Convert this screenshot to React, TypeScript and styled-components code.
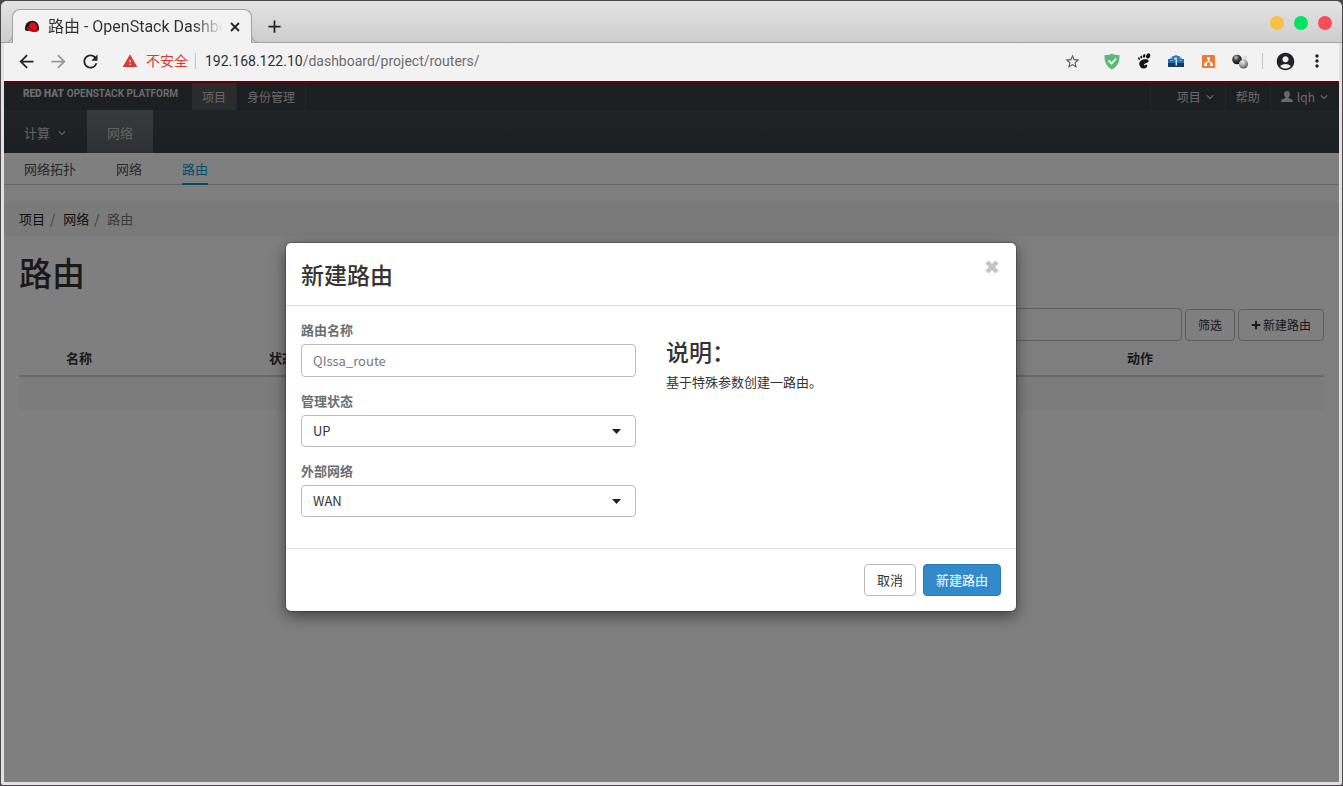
import React from "react";
import styled, { createGlobalStyle, css } from "styled-components";
import {
  MdAccountCircle,
  MdAdd,
  MdArrowBack,
  MdArrowForward,
  MdMoreVert,
  MdRefresh,
  MdStarBorder,
  MdWarning,
} from "react-icons/md";
import { FaPlus } from "react-icons/fa";

const appFont = `"Noto Sans CJK SC", "Noto Sans", sans-serif`;
const chromeFont = `Roboto, "Noto Sans CJK SC", sans-serif`;

const GlobalStyle = createGlobalStyle`
  *, *::before, *::after { box-sizing: border-box; }
  body { margin: 0; background: #161416; }
  button, input, select { font: inherit; color: inherit; margin: 0; }
  a { color: inherit; text-decoration: none; }
  svg { display: block; flex: none; }
`;

/* ---------- browser window ---------- */

const Desktop = styled.div`
  min-height: 100vh;
  display: flex;
  padding: 1px;
  background: #4b474b;
`;

const BrowserWindow = styled.div`
  flex: 1;
  min-width: 0;
  display: flex;
  flex-direction: column;
  border-radius: 6px 6px 2px 2px;
  background: #e2e0e1;
  overflow: hidden;
  font-family: ${chromeFont};
`;

const TitleBar = styled.header`
  height: 42px;
  display: flex;
  align-items: flex-end;
  padding: 0 10px 0 11px;
  background: linear-gradient(#e3e3e3, #cdcdcd);
  border-bottom: 1px solid #a3a3a3;
`;

const foot = css`
  content: "";
  position: absolute;
  bottom: 0;
  width: 8px;
  height: 8px;
  border-bottom: 1px solid #a3a3a3;
`;

const Tab = styled.div`
  position: relative;
  width: 240px;
  height: 34px;
  margin-bottom: -1px;
  padding: 0 9px 0 11px;
  display: flex;
  align-items: center;
  background: #f2f2f2;
  border: 1px solid #a3a3a3;
  border-bottom: 0;
  border-radius: 8px 8px 0 0;
  color: #333;
  &::before {
    ${foot}
    left: -8px;
    border-right: 1px solid #a3a3a3;
    border-bottom-right-radius: 8px;
  }
  &::after {
    ${foot}
    right: -8px;
    border-left: 1px solid #a3a3a3;
    border-bottom-left-radius: 8px;
  }
`;

const TabTitle = styled.span`
  flex: 1;
  min-width: 0;
  margin: 0 6px 0 8px;
  overflow: hidden;
  white-space: nowrap;
  font-size: 16px;
  line-height: 24px;
  mask-image: linear-gradient(90deg, #000 145px, transparent 175px);
`;

const IconButton = styled.button<{ $size?: number; $tone?: string }>`
  width: ${(p) => p.$size ?? 32}px;
  height: ${(p) => p.$size ?? 32}px;
  padding: 0;
  display: flex;
  align-items: center;
  justify-content: center;
  border: 0;
  background: none;
  color: ${(p) => p.$tone ?? "#222326"};
`;

const NewTab = styled(IconButton)`
  margin: 0 auto 0 6px;
`;

const WindowButtons = styled.div`
  display: flex;
  gap: 10px;
  margin-bottom: 12px;
`;

const WindowButton = styled.button<{ $color: string }>`
  width: 14px;
  height: 14px;
  padding: 0;
  border: 0;
  border-radius: 50%;
  background: ${(p) => p.$color};
`;

const Toolbar = styled.div`
  height: 38px;
  margin: 0 3px;
  padding: 0 6px 2px;
  display: flex;
  align-items: center;
  background: #f2f2f2;
`;

const AddressBar = styled.div`
  flex: 1;
  min-width: 0;
  display: flex;
  align-items: center;
  padding-left: 16px;
  font-size: 14px;
  line-height: 20px;
  white-space: nowrap;
`;

const Insecure = styled.span`
  display: flex;
  align-items: center;
  gap: 8px;
  padding-right: 7px;
  color: #d93a33;
`;

const Divider = styled.span`
  width: 1px;
  height: 16px;
  background: #c4c4c4;
`;

const Url = styled.span`
  padding-left: 9px;
  color: #6d6d6f;
  b {
    font-weight: 400;
    color: #2f3033;
  }
`;

const Extensions = styled.div`
  display: flex;
  align-items: center;
  margin: 0 6px 0 8px;
`;

const AccountArea = styled.div`
  display: flex;
  align-items: center;
  padding-left: 6px;
`;

/* ---------- dashboard ---------- */

const Viewport = styled.div`
  position: relative;
  flex: 1;
  margin: 0 3px 3px;
  background: #fff;
  font-family: ${appFont};
  font-size: 13px;
  line-height: 20px;
  color: #333;
`;

const TopNav = styled.nav`
  height: 29px;
  display: flex;
  background: #393f44;
  border-top: 2px solid #cc0010;
  font-size: 12px;
  color: #d1d1d1;
`;

const Brand = styled.a`
  width: 188px;
  padding-left: 19px;
  display: flex;
  align-items: center;
  gap: 3px;
  height: 22px;
  font-family: Roboto, sans-serif;
  font-size: 10px;
  font-weight: 600;
  white-space: nowrap;
  color: #d8dade;
  b {
    font-weight: 900;
  }
`;

const TopLink = styled.a<{ $active?: boolean; $side?: "left" | "right" }>`
  display: flex;
  align-items: center;
  gap: 4px;
  padding: 0 10px;
  background: ${(p) => (p.$active ? "#53575b" : "none")};
  border-${(p) => p.$side ?? "right"}: 1px solid #454b50;
`;

const TopRight = styled.div`
  display: flex;
  margin-left: auto;
`;

const ProjectLink = styled(TopLink)`
  padding-left: 26px;
`;

const MainNav = styled.nav`
  height: 43px;
  display: flex;
  background: linear-gradient(#41474c, #3a4045);
  color: #c5c5c5;
`;

const MainLink = styled.a<{ $active?: boolean }>`
  display: flex;
  align-items: center;
  gap: 7px;
  padding: 2px 20px 0;
  background: ${(p) => (p.$active ? "linear-gradient(#70757a, #5c6165)" : "none")};
`;

const SubNav = styled.nav`
  height: 32px;
  padding: 0 20px;
  display: flex;
  gap: 40px;
  border-bottom: 1px solid #cecece;
  color: #4d5258;
`;

const SubLink = styled.a<{ $active?: boolean }>`
  height: 32px;
  padding-top: 6px;
  ${(p) =>
    p.$active &&
    css`
      color: #0099d3;
      border-bottom: 2px solid #0099d3;
    `}
`;

const Breadcrumb = styled.ol`
  display: flex;
  list-style: none;
  margin: 17px 0 0;
  padding: 7px 15px;
  background: #f5f5f5;
  li + li::before {
    content: "/";
    padding: 0 8px 0 5px;
    color: #777;
  }
`;

const Crumb = styled.li<{ $current?: boolean }>`
  color: ${(p) => (p.$current ? "#777" : "#222")};
`;

const Content = styled.main`
  padding: 14px 15px;
`;

const PageTitle = styled.h1`
  margin: 0;
  font-size: 33px;
  line-height: 44px;
  font-weight: 500;
`;

const TableActions = styled.form`
  display: flex;
  align-items: center;
  justify-content: flex-end;
  gap: 3px;
  margin-top: 14px;
  font-size: 12px;
`;

const controlBox = css`
  height: 33px;
  border: 1px solid #bbb;
  border-radius: 4px;
  background: #fff;
`;

const FilterInput = styled.input`
  ${controlBox}
  width: 300px;
  padding: 0 12px;
`;

const Button = styled.button<{ $primary?: boolean }>`
  ${controlBox}
  height: 32px;
  padding: 0 12px;
  display: flex;
  align-items: center;
  gap: 2px;
  ${(p) =>
    p.$primary &&
    css`
      color: #fff;
      background: #338aca;
      border-color: #2a79b4;
    `}
`;

const DataTable = styled.table`
  width: 100%;
  border-collapse: collapse;
  table-layout: fixed;
  th {
    height: 35px;
    padding: 0 8px;
    text-align: left;
    font-weight: 700;
    border-bottom: 2px solid #d1d1d1;
  }
  td {
    height: 34px;
    background: #f9f9f9;
  }
`;

const Col = styled.col<{ $width: string }>`
  width: ${(p) => p.$width};
`;

/* ---------- modal ---------- */

const Backdrop = styled.div`
  position: absolute;
  inset: 0;
  padding: 162px 41px 20px 0;
  background: rgba(0, 0, 0, 0.5);
`;

const Modal = styled.section`
  max-width: 730px;
  margin: 0 auto;
  border-radius: 5px;
  background: #fff;
  box-shadow: 0 0 0 1px rgba(0, 0, 0, 0.2), 0 5px 15px rgba(0, 0, 0, 0.5);
`;

const ModalHeader = styled.header`
  display: flex;
  justify-content: space-between;
  align-items: flex-start;
  padding: 15px;
  border-bottom: 1px solid #dedede;
`;

const Heading = styled.h2`
  margin: 0;
  font-size: 23px;
  line-height: 32px;
  font-weight: 500;
`;

const ModalBody = styled.div`
  display: grid;
  grid-template-columns: 1fr 1fr;
  gap: 30px;
  padding: 14px 15px 31px;
`;

const Fields = styled.div`
  display: flex;
  flex-direction: column;
  gap: 14px;
`;

const Field = styled.div`
  display: flex;
  flex-direction: column;
  gap: 4px;
  label {
    font-weight: 700;
    color: #6c6e70;
  }
`;

const TextInput = styled.input`
  ${controlBox}
  width: 100%;
  padding: 0 11px;
  color: #777;
`;

const SelectWrap = styled.div`
  position: relative;
  svg {
    position: absolute;
    right: 15px;
    top: 14px;
    pointer-events: none;
  }
`;

const Select = styled.select`
  ${controlBox}
  display: block;
  width: 100%;
  height: 32px;
  padding: 0 11px;
  appearance: none;
`;

const Description = styled.div`
  padding-top: 15px;
  p {
    margin: 5px 0 0;
  }
`;

const ModalFooter = styled.footer`
  display: flex;
  justify-content: flex-end;
  gap: 7px;
  padding: 15px;
  border-top: 1px solid #dedede;
`;

/* ---------- drawings ---------- */

const Chevron = () => (
  <svg width="10" height="6" viewBox="0 0 10 6" fill="none" stroke="currentColor" strokeWidth="1.2">
    <path d="M1.800 1.300 5 4.500 8.200 1.300" />
  </svg>
);

const Caret = () => (
  <svg width="9" height="5" viewBox="0 0 9 5">
    <path d="M0 0h9L4.500 5z" fill="#222" />
  </svg>
);

const TabCloseIcon = () => (
  <svg width="10" height="10" viewBox="0 0 10 10" fill="none" stroke="currentColor" strokeWidth="1.800">
    <path d="m1 1 8 8M9 1 1 9" />
  </svg>
);

const HeavyCrossIcon = () => (
  <svg width="14" height="14" viewBox="0 0 14 14" fill="none" stroke="currentColor" strokeWidth="4.400">
    <path d="m2 2 10 10M12 2 2 12" />
  </svg>
);

const FedoraIcon = () => (
  <svg width="16" height="16" viewBox="0 0 16 16">
    <path d="M1 11C.4 5.500 3.800 1.700 8.200 1.700c4.400 0 7.500 4 6.600 9.500l-2 1.400-9.800-.6z" fill="#191010" />
    <path d="M4.700 7.900C5 5 6.600 3.200 8.600 3.500c.8-.8 3.200.2 3.800 2 .8 2 .9 3.500.5 4.700-2.700 1-6.300-.1-8.200-2.300z" fill="#e00b18" />
    <path d="M2.300 8.500c.7-.7 1.700-.5 2.400.2 2 2 5.300 2.700 8.300 2.200.8.7.4 1.600-.6 2-4 .9-9-1.200-10.100-4.400z" fill="#d30817" />
    <path d="M4.500 11.500c2 1.200 4 1.900 6 2l-1 .9c-2.500.1-4.500-.9-5-2.900z" fill="#fff" />
  </svg>
);

const ShieldIcon = () => (
  <svg width="16" height="17" viewBox="0 0 16 17">
    <path d="M8 .5c2 1.300 4.800 1.600 7.500 1.500.3 6-1.500 11.500-7.500 14.500C2 13.500.2 8 .5 2 3.200 2.100 6 1.800 8 .5z" fill="#5fb878" />
    <path d="m4.500 7.500 3 3 4.700-5" fill="none" stroke="#fff" strokeWidth="1.800" />
  </svg>
);

const GnomeFootIcon = () => (
  <svg width="14" height="16" viewBox="0 0 14 16" fill="#111">
    <ellipse cx="11.200" cy="2.900" rx="1.900" ry="2.700" transform="rotate(25 11.200 2.900)" />
    <ellipse cx="7.200" cy="2.900" rx="1.200" ry="1.900" transform="rotate(12 7.200 2.900)" />
    <ellipse cx="4.300" cy="4" rx="1" ry="1.600" />
    <ellipse cx="2" cy="5.600" rx=".9" ry="1.400" transform="rotate(-15 2 5.600)" />
    <path d="M9.600 6.300C5.500 5.900 2 8 2.300 11.200c.3 2.800 2.600 4.500 4.800 4.300 2-.1 3.400-1.500 3.100-3-.2-1.100-1.500-1.200-2.100-.4-.4.600-1.200.4-1.200-.3 0-1.600 4.800-1.400 4.700-3.700 0-1-1-1.700-2-1.800z" />
  </svg>
);

const VaultIcon = () => (
  <svg width="16" height="14" viewBox="0 0 16 14">
    <path d="M1 5.500 4.500 2h7L15 5.500z" fill="#5fa3dd" />
    <path d="M4.500 4C5 .2 11 .2 11.500 4v2h-7z" fill="#2c70b7" />
    <path d="M0 5h16v8H0z" fill="#2b6cab" />
    <path d="M0 9h16v4H0z" fill="#123c68" />
    <path d="M8.300 3.500v8M6.300 5.300l2-1.600" fill="none" stroke="#c6e6fb" strokeWidth="1.500" />
    <path d="M2 6.500h3M11 6.500h3" stroke="#64a8dd" />
  </svg>
);

const SitemapIcon = () => (
  <svg width="13" height="13" viewBox="0 0 13 13">
    <rect width="13" height="13" rx="1" fill="#ed7b36" />
    <path d="M6.500 4v2.500M3.500 9.500V8l3-2 3 2v1.500" fill="none" stroke="#fff" strokeWidth="1.100" />
    <path d="M5 2h3v3H5zM2 8h3v3H2zM8 8h3v3H8z" fill="#fff" />
  </svg>
);

const SpheresIcon = () => (
  <svg width="17" height="15" viewBox="0 0 17 15">
    <defs>
      <radialGradient id="darkBall" cx=".4" cy=".3" r=".6">
        <stop offset="0" stopColor="#c9c9c9" />
        <stop offset=".5" stopColor="#444" />
        <stop offset="1" stopColor="#161616" />
      </radialGradient>
      <radialGradient id="lightBall" cx=".4" cy=".3" r=".7">
        <stop offset="0" stopColor="#eee" />
        <stop offset=".6" stopColor="#999" />
        <stop offset="1" stopColor="#555" />
      </radialGradient>
    </defs>
    <circle cx="13" cy="4" r="2.500" fill="#ddd" />
    <circle cx="5" cy="5.500" r="4.800" fill="url(#darkBall)" />
    <circle cx="11.500" cy="10" r="4.600" fill="url(#lightBall)" />
  </svg>
);

const UserIcon = () => (
  <svg width="12" height="11" viewBox="0 0 12 11" fill="currentColor">
    <path d="M6 0c1.900 0 2.900 1.200 2.900 3 0 1.400-.6 2.600-1.400 3.200v.8l3.400 1.500c.6.300.9.700.9 1.300V11H.1V9.800c0-.6.300-1 .9-1.300L4.500 7v-.8C3.700 5.600 3.100 4.400 3.100 3c0-1.800 1-3 2.900-3z" />
  </svg>
);

const extensions = [
  { name: "AdGuard", icon: <ShieldIcon /> },
  { name: "GNOME Shell", icon: <GnomeFootIcon /> },
  { name: "Vault", icon: <VaultIcon /> },
  { name: "Sitemap", icon: <SitemapIcon /> },
  { name: "Spheres", icon: <SpheresIcon /> },
];

const BrowserChrome = () => (
  <>
    <TitleBar>
      <Tab>
        <FedoraIcon />
        <TabTitle>路由 - OpenStack Dashboard</TabTitle>
        <IconButton $size={14} aria-label="Close tab">
          <TabCloseIcon />
        </IconButton>
      </Tab>
      <NewTab aria-label="New tab">
        <MdAdd size={21} />
      </NewTab>
      <WindowButtons>
        <WindowButton $color="#fcbe43" aria-label="Minimize" />
        <WindowButton $color="#00e561" aria-label="Maximize" />
        <WindowButton $color="#fb4b59" aria-label="Close" />
      </WindowButtons>
    </TitleBar>
    <Toolbar>
      <IconButton aria-label="Back">
        <MdArrowBack size={21} />
      </IconButton>
      <IconButton aria-label="Forward" $tone="#97989a">
        <MdArrowForward size={21} />
      </IconButton>
      <IconButton aria-label="Reload">
        <MdRefresh size={21} />
      </IconButton>
      <AddressBar>
        <Insecure>
          <MdWarning size={16} />
          不安全
        </Insecure>
        <Divider />
        <Url>
          <b>192.168.122.10</b>/dashboard/project/routers/
        </Url>
      </AddressBar>
      <IconButton aria-label="Bookmark" $tone="#5c5e62">
        <MdStarBorder size={17} />
      </IconButton>
      <Extensions>
        {extensions.map((e) => (
          <IconButton key={e.name} aria-label={e.name}>
            {e.icon}
          </IconButton>
        ))}
      </Extensions>
      <Divider />
      <AccountArea>
        <IconButton aria-label="Account">
          <MdAccountCircle size={21} />
        </IconButton>
        <IconButton aria-label="Menu">
          <MdMoreVert size={20} />
        </IconButton>
      </AccountArea>
    </Toolbar>
  </>
);

const CreateRouterModal = () => (
  <Backdrop>
    <Modal role="dialog" aria-labelledby="modal-title">
      <ModalHeader>
        <Heading id="modal-title">新建路由</Heading>
        <IconButton $size={18} $tone="#c4c4c4" aria-label="关闭">
          <HeavyCrossIcon />
        </IconButton>
      </ModalHeader>
      <ModalBody>
        <Fields>
          <Field>
            <label htmlFor="name">路由名称</label>
            <TextInput id="name" defaultValue="QIssa_route" />
          </Field>
          <Field>
            <label htmlFor="state">管理状态</label>
            <SelectWrap>
              <Select id="state">
                <option>UP</option>
              </Select>
              <Caret />
            </SelectWrap>
          </Field>
          <Field>
            <label htmlFor="network">外部网络</label>
            <SelectWrap>
              <Select id="network">
                <option>WAN</option>
              </Select>
              <Caret />
            </SelectWrap>
          </Field>
        </Fields>
        <Description>
          <Heading as="h3">说明：</Heading>
          <p>基于特殊参数创建一路由。</p>
        </Description>
      </ModalBody>
      <ModalFooter>
        <Button type="button">取消</Button>
        <Button type="submit" $primary>
          新建路由
        </Button>
      </ModalFooter>
    </Modal>
  </Backdrop>
);

export default function App() {
  return (
    <Desktop>
      <GlobalStyle />
      <BrowserWindow>
        <BrowserChrome />
        <Viewport>
          <TopNav>
            <Brand href="#">
              <b>RED HAT</b>OPENSTACK PLATFORM
            </Brand>
            <TopLink href="#" $active>
              项目
            </TopLink>
            <TopLink href="#">身份管理</TopLink>
            <TopRight>
              <ProjectLink href="#" $side="left">
                项目 <Chevron />
              </ProjectLink>
              <TopLink href="#" $side="left">
                帮助
              </TopLink>
              <TopLink href="#" $side="left">
                <UserIcon /> lqh <Chevron />
              </TopLink>
            </TopRight>
          </TopNav>
          <MainNav>
            <MainLink href="#">
              计算 <Chevron />
            </MainLink>
            <MainLink href="#" $active>
              网络
            </MainLink>
          </MainNav>
          <SubNav>
            <SubLink href="#">网络拓扑</SubLink>
            <SubLink href="#">网络</SubLink>
            <SubLink href="#" $active>
              路由
            </SubLink>
          </SubNav>
          <Breadcrumb>
            <Crumb>
              <a href="#">项目</a>
            </Crumb>
            <Crumb>
              <a href="#">网络</a>
            </Crumb>
            <Crumb $current>路由</Crumb>
          </Breadcrumb>
          <Content>
            <PageTitle>路由</PageTitle>
            <TableActions>
              <FilterInput aria-label="筛选" />
              <Button type="button">筛选</Button>
              <Button type="button">
                <FaPlus size={10} />
                新建路由
              </Button>
            </TableActions>
            <DataTable>
              <colgroup>
                <Col $width="39px" />
                <Col $width="203px" />
                <Col $width="auto" />
                <Col $width="205px" />
              </colgroup>
              <thead>
                <tr>
                  <th />
                  <th>名称</th>
                  <th>状态</th>
                  <th>动作</th>
                </tr>
              </thead>
              <tbody>
                <tr>
                  <td colSpan={4} />
                </tr>
              </tbody>
            </DataTable>
          </Content>
          <CreateRouterModal />
        </Viewport>
      </BrowserWindow>
    </Desktop>
  );
}
